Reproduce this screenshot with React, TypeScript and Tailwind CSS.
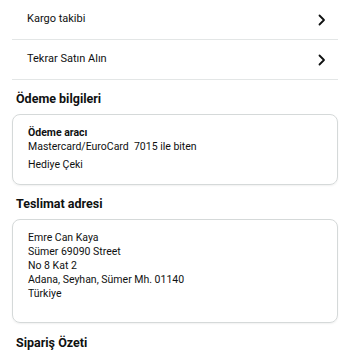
import React from "react";

const FONT = { fontFamily: "Roboto, 'Noto Sans', Arial, sans-serif" };

function Chevron() {
  return (
    <svg width="8" height="12" viewBox="0 0 8 12" className="text-[#0f1111]">
      <path d="M1.5 1.5 L6 6 L1.5 10.5" fill="none" stroke="currentColor" strokeWidth="1.8" strokeLinecap="round" strokeLinejoin="round" />
    </svg>
  );
}

const ROWS = ["Kargo takibi", "Tekrar Satın Alın"];

export default function App() {
  return (
    <div className="w-[350px] h-[350px] overflow-hidden bg-white text-[#0f1111]" style={FONT}>
      {/* action rows */}
      <div className="px-3">
        {ROWS.map((r) => (
          <div key={r} className="flex h-[40px] items-center justify-between border-b border-[#e3e6e6] pl-[15px] pr-[12px]">
            <span className="text-[11px]">{r}</span>
            <Chevron />
          </div>
        ))}
      </div>

      {/* payment */}
      <h2 className="px-4 pt-[10px] text-[12.5px] font-bold leading-[18px]">Ödeme bilgileri</h2>
      <div className="mx-3 mt-[6px] rounded-lg border border-[#d5d9d9] px-[15px] pt-[11px] pb-[12px] text-[10.5px] leading-[14px] shadow-[0_1px_2px_rgba(0,0,0,0.06)]">
        <div className="font-bold">Ödeme aracı</div>
        <div>Mastercard/EuroCard&nbsp; 7015 ile biten</div>
        <div className="mt-[4px]">Hediye Çeki</div>
      </div>

      {/* address */}
      <h2 className="px-4 pt-[10px] text-[12.5px] font-bold leading-[18px]">Teslimat adresi</h2>
      <div className="mx-3 mt-[6px] h-[104px] rounded-lg border border-[#d5d9d9] px-[15px] pt-[11px] text-[10.5px] leading-[14px] shadow-[0_1px_2px_rgba(0,0,0,0.06)]">
        <div>Emre Can Kaya</div>
        <div>Sümer 69090 Street</div>
        <div>No 8 Kat 2</div>
        <div>Adana, Seyhan, Sümer Mh. 01140</div>
        <div>Türkiye</div>
      </div>

      <h2 className="px-4 pt-[11px] text-[12.5px] font-bold leading-[18px]">Sipariş Özeti</h2>
    </div>
  );
}
